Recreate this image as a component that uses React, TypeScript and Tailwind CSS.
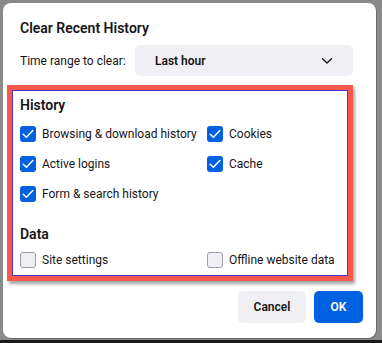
import React from "react";

function Check({ checked }: { checked: boolean }) {
  if (checked) {
    return (
      <span className="flex h-[16px] w-[16px] shrink-0 items-center justify-center rounded-[3px] bg-[#0061e0]">
        <svg width="12" height="10" viewBox="0 0 12 10" fill="none">
          <path d="M1.2 5.2 L4.4 8.3 L10.8 1.6" stroke="white" strokeWidth="1.5" strokeLinecap="round" strokeLinejoin="round" />
        </svg>
      </span>
    );
  }
  return <span className="h-[16px] w-[16px] shrink-0 rounded-[3px] border border-[#9e9ea8] bg-[#f0f0f4]" />;
}

function Item({ label, checked }: { label: string; checked: boolean }) {
  return (
    <div className="flex h-[30px] items-center gap-[6px] whitespace-nowrap">
      <Check checked={checked} />
      <span className="text-[12px] text-[#15141a]">{label}</span>
    </div>
  );
}

export default function App() {
  return (
    <div
      className="flex h-[343px] w-[382px] flex-col overflow-hidden bg-[#8a8a8a]"
      style={{ fontFamily: "Roboto, 'Noto Sans', sans-serif" }}
    >
      <div className="ml-[3px] mt-[3px] flex h-[335px] w-[373px] flex-col rounded-[8px] bg-white shadow-[1px_1px_0_#6b6b6b]">
        <div className="ml-[17px] mt-[15px] flex h-[20px] items-center whitespace-nowrap text-[14px] font-semibold text-[#15141a]">
          Clear Recent History
        </div>
        <div className="ml-[17px] mt-[7px] flex h-[31px] items-center whitespace-nowrap">
          <span className="w-[115px] text-[12px] text-[#15141a]">Time range to clear:</span>
          <div className="flex h-[31px] w-[218px] items-center justify-between rounded-[5px] bg-[#f0f0f4] pl-[20px] pr-[20px]">
            <span className="text-[12px] font-semibold text-[#15141a]">Last hour</span>
            <svg width="12" height="8" viewBox="0 0 12 8" fill="none">
              <path d="M1.5 1.8 L6 6 L10.5 1.8" stroke="#15141a" strokeWidth="1.3" strokeLinecap="round" strokeLinejoin="round" />
            </svg>
          </div>
        </div>
        <div className="ml-[4px] mt-[9px] h-[196px] w-[346px] border-[5px] border-[#f9594b] shadow-[2px_3px_3px_rgba(0,0,0,0.35)]">
          <div className="flex h-full w-full flex-col border border-[#4a32d0] pl-[7px]">
            <div className="mt-[4px] flex h-[20px] items-center text-[14px] font-semibold text-[#15141a]">History</div>
            <div className="mt-[4px] grid grid-cols-[187px_1fr]">
              <Item label="Browsing & download history" checked />
              <Item label="Cookies" checked />
              <Item label="Active logins" checked />
              <Item label="Cache" checked />
              <Item label="Form & search history" checked />
            </div>
            <div className="mt-[15px] flex h-[20px] items-center text-[14px] font-semibold text-[#15141a]">Data</div>
            <div className="mt-[1px] grid grid-cols-[187px_1fr]">
              <Item label="Site settings" checked={false} />
              <Item label="Offline website data" checked={false} />
            </div>
          </div>
        </div>
        <div className="mr-[13px] mt-[10px] flex justify-end gap-[8px]">
          <button className="h-[32px] w-[68px] rounded-[5px] bg-[#f0f0f4] text-[12px] font-semibold text-[#15141a]">Cancel</button>
          <button className="h-[32px] w-[49px] rounded-[5px] bg-[#0061e0] text-[12px] font-semibold text-white">OK</button>
        </div>
      </div>
      <div className="mt-[2px] h-[3px] w-full bg-[#1a1a1a]" />
    </div>
  );
}
